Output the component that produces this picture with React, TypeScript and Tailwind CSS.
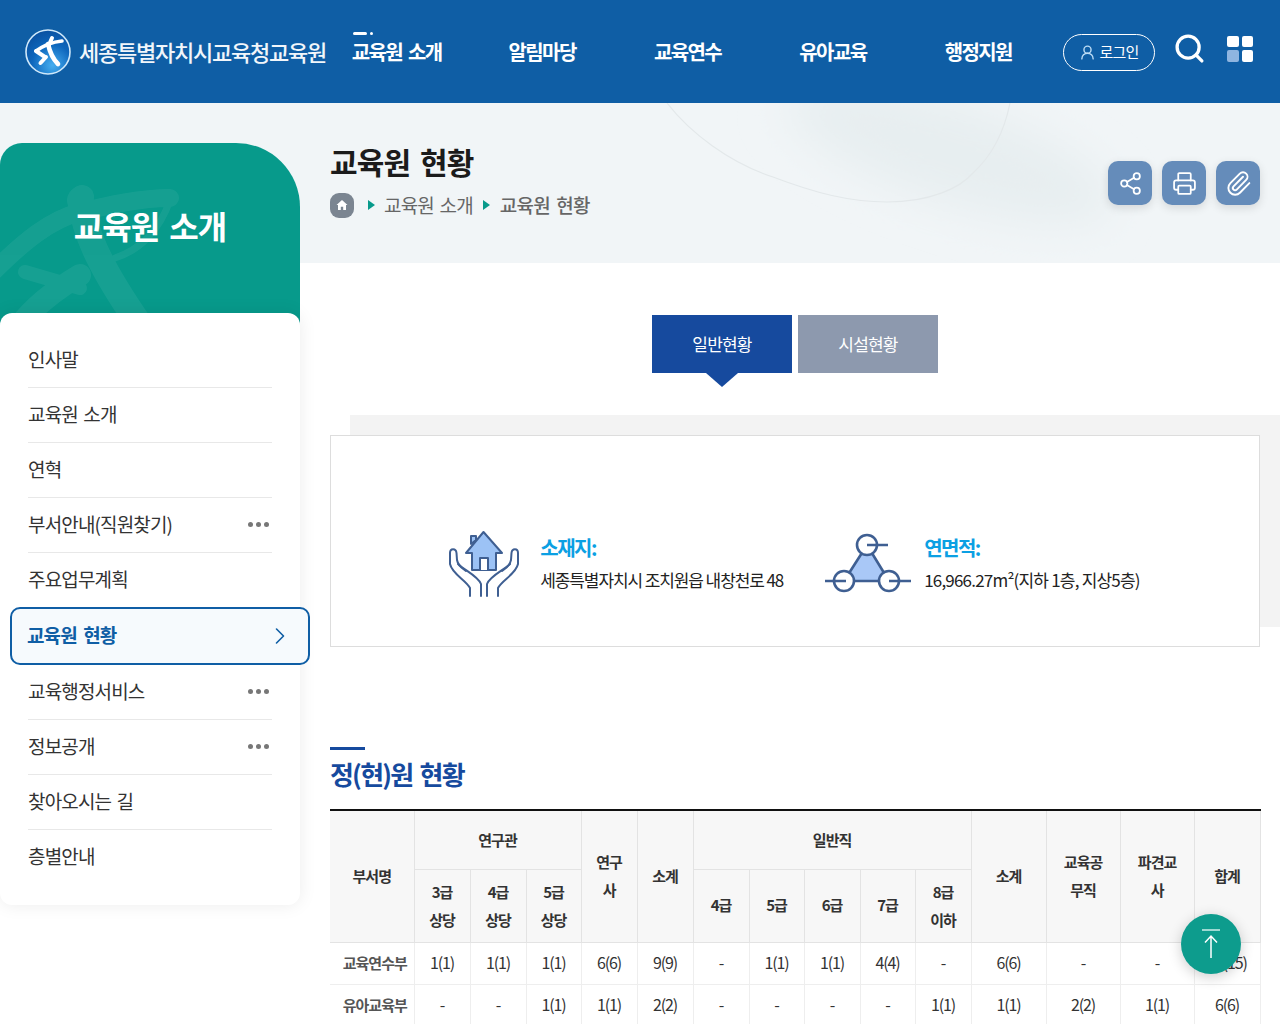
import React from 'react';
import { Share2, Printer, Paperclip, ChevronRight, UserRound, Search } from 'lucide-react';

const navItems = ['교육원 소개', '알림마당', '교육연수', '유아교육', '행정지원'];

const menuItems = [
  { label: '인사말' },
  { label: '교육원 소개' },
  { label: '연혁' },
  { label: '부서안내(직원찾기)', more: true },
  { label: '주요업무계획', last: true, short: true },
  { label: '교육원 현황', active: true },
  { label: '교육행정서비스', more: true },
  { label: '정보공개', more: true },
  { label: '찾아오시는 길' },
  { label: '층별안내', last: true },
];

const colWidths = [84, 56, 56, 55, 56, 56, 56, 55, 56, 55, 56, 75, 74, 74, 66];

const rows = [
  ['교육연수부', '1(1)', '1(1)', '1(1)', '6(6)', '9(9)', '-', '1(1)', '1(1)', '4(4)', '-', '6(6)', '-', '-', '15(15)'],
  ['유아교육부', '-', '-', '1(1)', '1(1)', '2(2)', '-', '-', '-', '-', '1(1)', '1(1)', '2(2)', '1(1)', '6(6)'],
];

const Logo = () => (
  <svg viewBox="0 0 46 46" className="w-[46px] h-[46px] shrink-0">
    <defs>
      <radialGradient id="lg" cx="0.6" cy="0.8" r="0.85">
        <stop offset="0" stopColor="#45aef0" />
        <stop offset="0.55" stopColor="#0d66bc" />
        <stop offset="1" stopColor="#0a4f9e" />
      </radialGradient>
    </defs>
    <circle cx="23" cy="23" r="22" fill="url(#lg)" stroke="#cfe8fa" strokeWidth="1.6" />
    <g fill="none" stroke="#fff" strokeLinecap="round">
      <path d="M27 9 L23.5 17" strokeWidth="4" />
      <path d="M11 22 C18 17 27 13 37 12" strokeWidth="3.6" />
      <path d="M11 22 L20 28" strokeWidth="4" />
      <path d="M23 15 C25 24 28 30 33 35" strokeWidth="4.6" />
      <path d="M21 28 L15.5 34" strokeWidth="4" />
    </g>
  </svg>
);

const HandsIcon = () => {
  const hand = (
    <>
      <path d="M26 70 V62 C22 54 8 48 6 38 V27 C6 22 12 22 12.5 27 L13 34 C14 40 18 42 22 45" />
      <path d="M14 38 C20 44 34 50 37 58 V70" />
    </>
  );
  return (
    <svg viewBox="0 0 80 76" className="w-[80px] h-[76px] shrink-0" fill="none" stroke="#3f5f92" strokeWidth="2" strokeLinejoin="round" strokeLinecap="round">
      <path d="M27 18 V10 H32 V14 Z" fill="#9cc2f5" />
      <path d="M39.5 6 L58 27 H52 V44 H28 V27 H22 Z" fill="#9cc2f5" />
      <path d="M36 44 V32 H44 V44" fill="#fff" />
      {hand}
      <g transform="translate(80 0) scale(-1 1)">{hand}</g>
    </svg>
  );
};

const AreaIcon = () => (
  <svg viewBox="0 0 96 70" className="w-[96px] h-[70px] shrink-0" fill="none" stroke="#3f5f92" strokeWidth="2.6">
    <path d="M48 16 L70 52 H25 Z" fill="#a9c8f7" />
    <circle cx="48" cy="16" r="10" fill="#fff" />
    <circle cx="25" cy="52" r="10" fill="#fff" />
    <circle cx="70" cy="52" r="10" fill="#fff" />
    <path d="M48 16 H69 M6 52 H27 M70 52 H92" />
  </svg>
);

const GridIcon = () => (
  <div className="grid grid-cols-2 gap-[3px] w-[26px] shrink-0">
    <span className="h-[11.5px] rounded-[2px] bg-white" />
    <span className="h-[11.5px] rounded-[2px] bg-white" />
    <span className="h-[11.5px] rounded-[2px] bg-[#8fb5e0]" />
    <span className="h-[11.5px] rounded-[2px] bg-white" />
  </div>
);

const Th = ({ children, className = '', ...rest }: React.ThHTMLAttributes<HTMLTableCellElement>) => (
  <th {...rest} className={`bg-[#f7f7f7] border border-[#e3e3e3] text-[15px] leading-[28px] font-bold text-[#333] tracking-[-1px] p-0 ${className}`}>
    {children}
  </th>
);

export default function App() {
  return (
    <div className="relative w-[1280px] h-[1024px] overflow-hidden bg-white font-['Noto_Sans_CJK_KR','Noto_Sans',sans-serif] text-[#222]">
      {/* header */}
      <header className="flex items-center h-[103px] bg-[#0f5ea5] text-white">
        <div className="flex items-center w-[324px] pl-[25px] gap-[8px] shrink-0">
          <Logo />
          <span className="text-[22px] font-medium tracking-[-1.25px] whitespace-nowrap text-[#f1f6fb]">세종특별자치시교육청교육원</span>
        </div>
        <nav className="grid grid-cols-5 w-[727px] shrink-0">
          {navItems.map((item, i) => (
            <a key={item} className="relative text-center text-[20px] leading-[30px] font-bold tracking-[-1.6px] [word-spacing:3px] whitespace-nowrap">
              {i === 0 && (
                <span className="absolute left-[29px] top-[-5px] flex items-center gap-[3px]">
                  <span className="w-[14px] h-[3px] rounded-full bg-white" />
                  <span className="w-[3px] h-[3px] rounded-full bg-white" />
                </span>
              )}
              {item}
            </a>
          ))}
        </nav>
        <a className="flex items-center justify-center gap-[3px] ml-[12px] mt-[2px] w-[92px] h-[37px] border border-white rounded-full text-[15px] tracking-[-0.8px] shrink-0">
          <UserRound size={17} className="text-[#bcdcf5]" />
          로그인
        </a>
        <Search size={33} strokeWidth={2.4} className="ml-[18px] mb-[7px] shrink-0" />
        <div className="ml-[21px] mb-[6px]">
          <GridIcon />
        </div>
      </header>

      {/* band colour runs behind the sidebar top and the page title */}
      <div className="relative flex bg-[linear-gradient(#f1f5f7_160px,#ffffff_160px)]">
        <svg viewBox="0 0 1280 160" className="absolute left-0 top-0 w-[1280px] h-[160px] pointer-events-none">
          <defs>
            <filter id="soft" x="-30%" y="-60%" width="160%" height="220%">
              <feGaussianBlur stdDeviation="22" />
            </filter>
          </defs>
          <ellipse cx="950" cy="50" rx="170" ry="50" fill="#e7eef0" filter="url(#soft)" transform="rotate(18 950 50)" />
          <path d="M667 0 C690 30 730 60 773 74 C815 90 850 99 887 99 C930 99 960 85 973 70 C995 50 1005 25 1010 0" fill="none" stroke="#e3e8ea" strokeWidth="1.2" />
        </svg>

        {/* sidebar */}
        <aside className="relative w-[300px] shrink-0 pt-[40px]">
          <div className="relative h-[190px] rounded-tl-[22px] rounded-tr-[64px] bg-[#079a8b] overflow-hidden flex justify-center pt-[58px]">
            <svg viewBox="0 0 200 150" className="absolute left-0 top-[27px] w-[200px] h-[150px]" fill="none">
              <g opacity="0.06" stroke="#fff" strokeLinecap="round">
                <circle cx="82" cy="27" r="12" fill="#fff" stroke="none" />
                <path d="M-10 105 C25 70 50 50 80 42 C110 35 140 28 170 28" strokeWidth="18" />
                <path d="M80 30 C85 60 95 90 140 155" strokeWidth="26" />
                <path d="M80 105 C55 120 35 135 20 155" strokeWidth="22" />
                <path d="M25 102 L80 118" strokeWidth="14" />
                <path d="M115 88 C140 80 160 60 170 30" strokeWidth="7" />
              </g>
            </svg>
            <h2 className="relative text-[32px] leading-[48px] font-bold text-white tracking-[-1px] [word-spacing:4px]">교육원 소개</h2>
          </div>
          <ul className="relative -mt-[20px] bg-white rounded-[12px] pt-[20px] pb-[20px] shadow-[0_0_18px_rgba(0,0,0,0.08)]">
            {menuItems.map((m) =>
              m.active ? (
                <li key={m.label} className="relative flex items-center justify-between ml-[10px] -mr-[10px] h-[58px] pl-[15px] pr-[14px] pb-[1px] border-2 border-[#0f5ea5] rounded-[10px] bg-[#f6fafd] text-[#0f5ea5] text-[19px] font-bold tracking-[-0.9px] [word-spacing:3px]">
                  {m.label}
                  <ChevronRight size={28} strokeWidth={1.4} />
                </li>
              ) : (
                <li key={m.label} className="px-[28px]">
                  <div className={`flex items-center justify-between pb-[2px] text-[19px] tracking-[-0.85px] [word-spacing:2px] text-[#333] ${m.short ? 'h-[54px]' : 'h-[55px]'} ${m.last ? '' : 'border-b border-[#e8e8e8]'}`}>
                    {m.label}
                    {m.more && (
                      <span className="flex gap-[3px] mr-[3px]">
                        <span className="w-[5px] h-[5px] rounded-full bg-[#777]" />
                        <span className="w-[5px] h-[5px] rounded-full bg-[#777]" />
                        <span className="w-[5px] h-[5px] rounded-full bg-[#777]" />
                      </span>
                    )}
                  </div>
                </li>
              )
            )}
          </ul>
        </aside>

        {/* main */}
        <main className="relative flex-1 pl-[30px] pr-[20px] pt-[38px] min-w-0">
          <div className="flex justify-between h-[122px]">
            <div>
              <h1 className="text-[30px] leading-[40px] font-bold text-[#1b1b1b] tracking-[-0.9px] [word-spacing:4px]">교육원 현황</h1>
              <div className="flex items-center mt-[11px] text-[19px] leading-[26px] text-[#666] tracking-[-0.8px] [word-spacing:2px]">
                <span className="flex items-center justify-center w-[24px] h-[25px] rounded-[9px] bg-[#7b8591]">
                  <svg viewBox="0 0 12 12" className="w-[12px] h-[12px]" fill="#fff">
                    <path d="M6 1 L11.5 6 H10 V11 H7.2 V7.8 H4.8 V11 H2 V6 H0.5 Z" />
                  </svg>
                </span>
                <span className="ml-[14px] mr-[9px] w-0 h-0 border-y-[5.5px] border-y-transparent border-l-[7px] border-l-[#079a8b]" />
                교육원 소개
                <span className="ml-[10px] mr-[10px] w-0 h-0 border-y-[5.5px] border-y-transparent border-l-[7px] border-l-[#079a8b]" />
                <span className="font-medium [word-spacing:3px]">교육원 현황</span>
              </div>
            </div>
            <div className="flex gap-[10px] mt-[20px] h-[44px]">
              {[Share2, Printer, Paperclip].map((Icon, i) => (
                <button key={i} className="flex items-center justify-center w-[44px] h-[44px] rounded-[10px] bg-[#658cba] text-white shadow-[0_3px_10px_rgba(0,0,0,0.12)]">
                  <Icon size={i === 2 ? 27 : 25} strokeWidth={1.7} />
                </button>
              ))}
            </div>
          </div>

          {/* tabs */}
          <div className="flex justify-center gap-[6px] mt-[52px]">
            <a className="relative flex items-center justify-center w-[140px] h-[58px] bg-[#164a9e] text-white text-[17px] tracking-[-0.8px]">
              일반현황
              <span className="absolute left-[54px] top-[58px] w-0 h-0 border-x-[16px] border-x-transparent border-t-[14px] border-t-[#164a9e]" />
            </a>
            <a className="flex items-center justify-center w-[140px] h-[58px] bg-[#8d99ae] text-white text-[17px] tracking-[-0.8px]">시설현황</a>
          </div>

          {/* info box */}
          <div className="flex items-center justify-center gap-[36px] mt-[62px] h-[212px] pt-[46px] pr-[6px] bg-white border border-[#dddddd] shadow-[20px_-20px_0_#f3f3f3]">
            <div className="flex items-center gap-[16px]">
              <HandsIcon />
              <div>
                <p className="text-[20px] leading-[30px] font-bold text-[#0ba0e3] tracking-[-1.5px]">소재지:</p>
                <p className="mt-[2px] text-[17px] leading-[30px] text-[#222] tracking-[-1.1px] whitespace-nowrap">세종특별자치시 조치원읍 내창천로 48</p>
              </div>
            </div>
            <div className="flex items-center gap-[9px]">
              <AreaIcon />
              <div>
                <p className="text-[20px] leading-[30px] font-bold text-[#0ba0e3] tracking-[-1.5px]">연면적:</p>
                <p className="mt-[2px] text-[17px] leading-[30px] text-[#222] tracking-[-0.8px] whitespace-nowrap">16,966.27m²(지하 1층, 지상5층)</p>
              </div>
            </div>
          </div>

          {/* staff table */}
          <div className="w-[35px] h-[3px] mt-[100px] bg-[#164a9e]" />
          <h3 className="mt-[5px] text-[26px] leading-[38px] font-bold text-[#164a9e] tracking-[-1.8px] [word-spacing:3px]">정(현)원 현황</h3>
          <table className="mt-[16px] w-[930px] table-fixed border-collapse border-t-2 border-t-[#111]">
            <colgroup>
              {colWidths.map((w, i) => (
                <col key={i} width={w} />
              ))}
            </colgroup>
            <thead>
              <tr className="h-[59px]">
                <Th rowSpan={2} className="border-l-0">부서명</Th>
                <Th colSpan={3}>연구관</Th>
                <Th rowSpan={2}>연구<br />사</Th>
                <Th rowSpan={2}>소계</Th>
                <Th colSpan={5}>일반직</Th>
                <Th rowSpan={2}>소계</Th>
                <Th rowSpan={2}>교육공<br />무직</Th>
                <Th rowSpan={2}>파견교<br />사</Th>
                <Th rowSpan={2}>합계</Th>
              </tr>
              <tr className="h-[73px]">
                <Th>3급<br />상당</Th>
                <Th>4급<br />상당</Th>
                <Th>5급<br />상당</Th>
                <Th className="pb-[2px]">4급</Th>
                <Th className="pb-[2px]">5급</Th>
                <Th className="pb-[2px]">6급</Th>
                <Th className="pb-[2px]">7급</Th>
                <Th>8급<br />이하</Th>
              </tr>
            </thead>
            <tbody>
              {rows.map((r) => (
                <tr key={r[0]} className="h-[42px]">
                  {r.map((c, i) =>
                    i === 0 ? (
                      <th key={i} className="border border-l-0 border-[#eeeeee] p-0 pl-[6px] text-[15px] font-bold text-[#555] tracking-[-1px] whitespace-nowrap">{c}</th>
                    ) : (
                      <td key={i} className="border border-[#eeeeee] p-0 pb-[2px] text-center text-[16px] text-[#333] tracking-[-1.1px]">{c}</td>
                    )
                  )}
                </tr>
              ))}
            </tbody>
          </table>
        </main>
      </div>

      {/* back to top */}
      <button className="absolute left-[1181px] top-[914px] flex items-center justify-center w-[60px] h-[60px] rounded-full bg-[#0d9c8d] text-white shadow-[0_3px_14px_rgba(0,0,0,0.2)]">
        <svg viewBox="0 0 20 30" className="w-[20px] h-[30px]" fill="none" stroke="#fff" strokeWidth="1.5">
          <path d="M1 1 H19" stroke="#cfeeea" />
          <path d="M10 7 V29 M4 13.5 L10 7 L16 13.5" />
        </svg>
      </button>
    </div>
  );
}
